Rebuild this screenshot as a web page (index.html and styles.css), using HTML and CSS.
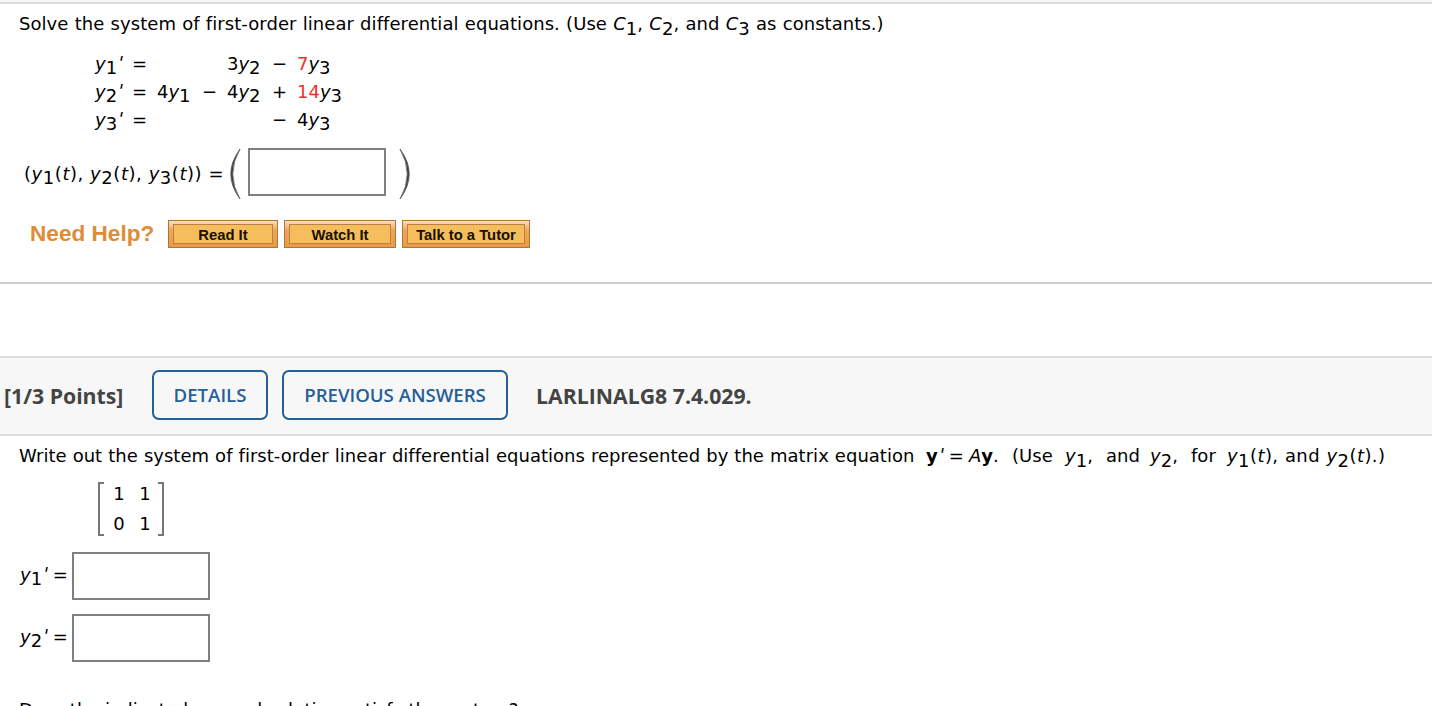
FILE: index.html
```html
<!DOCTYPE html>
<html lang="en">
<head>
<meta charset="utf-8">
<title>Differential equations</title>
<link rel="stylesheet" href="styles.css">
</head>
<body>
<div class="top-bar"></div>
<section class="question">
  <p class="prompt first">Solve the system of first-order linear differential equations. (Use <i>C</i><sub>1</sub>, <i>C</i><sub>2</sub>, and <i>C</i><sub>3</sub> as constants.)</p>
  <div class="system">
    <span><i>y</i><sub>1</sub><i class="prime">'</i></span><span>=</span><span></span><span></span><span>3<i>y</i><sub>2</sub></span><span>−</span><span><b class="red">7</b><i>y</i><sub>3</sub></span>
    <span><i>y</i><sub>2</sub><i class="prime">'</i></span><span>=</span><span>4<i>y</i><sub>1</sub></span><span>−</span><span>4<i>y</i><sub>2</sub></span><span>+</span><span><b class="red">14</b><i>y</i><sub>3</sub></span>
    <span><i>y</i><sub>3</sub><i class="prime">'</i></span><span>=</span><span></span><span></span><span></span><span>−</span><span>4<i>y</i><sub>3</sub></span>
  </div>
  <div class="solution">
    <span class="vector">(<i>y</i><sub>1</sub>(<i>t</i>), <i>y</i><sub>2</sub>(<i>t</i>), <i>y</i><sub>3</sub>(<i>t</i>)) =</span>
    <svg class="paren" width="12" height="52" viewBox="0 0 12 52"><path d="M11 1Q-7.500 26 11 51Q-3.500 26 11 1Z"/></svg>
    <input class="answer" type="text" aria-label="Solution">
    <svg class="paren close" width="12" height="52" viewBox="0 0 12 52"><path d="M1 1Q19.500 26 1 51Q15.500 26 1 1Z"/></svg>
  </div>
  <div class="help">
    <strong class="help-title">Need Help?</strong>
    <button class="help-btn read"><span>Read It</span></button>
    <button class="help-btn watch"><span>Watch It</span></button>
    <button class="help-btn tutor"><span>Talk to a Tutor</span></button>
  </div>
</section>
<header class="question-header">
  <span class="points">[1/3 Points]</span>
  <button class="outline details">DETAILS</button>
  <button class="outline previous">PREVIOUS ANSWERS</button>
  <span class="code">LARLINALG8 7.4.029.</span>
</header>
<section class="question second-question">
  <p class="prompt second"><span class="lead">Write out the system of first-order linear differential equations represented by the matrix equation</span><span class="eq"><b>y</b><i class="prime">'</i> = <i>A</i><b>y</b>.</span><span class="use">(Use</span><span class="var"><i>y</i><sub>1</sub>,</span><span class="and">and</span><span class="var"><i>y</i><sub>2</sub>,</span><span class="for">for</span><span class="tail"><i>y</i><sub>1</sub>(<i>t</i>), and <i>y</i><sub>2</sub>(<i>t</i>).)</span></p>
  <div class="matrix">
    <span>1</span><span>1</span><span>0</span><span>1</span>
  </div>
  <div class="field"><label for="y1"><i>y</i><sub>1</sub><i class="prime">'</i> =</label><input class="answer" id="y1" type="text"></div>
  <div class="field"><label for="y2"><i>y</i><sub>2</sub><i class="prime">'</i> =</label><input class="answer" id="y2" type="text"></div>
  <p class="prompt last">Does the indicated general solution satisfy the system?</p>
</section>
</body>
</html>
```
FILE: styles.css
```css
* { box-sizing: border-box; }
body {
  margin: 0;
  height: 706px;
  overflow: hidden;
  background: #fff;
  color: #000;
  font: 18px/28px Verdana, "DejaVu Sans", sans-serif;
}
p { margin: 0; white-space: nowrap; }
sub { font-size: 18px; line-height: 0; vertical-align: -5px; }
.prime { display: inline-block; width: 5px; margin-left: 1px; line-height: 0; vertical-align: 1px; transform: skewX(-12deg); }
.top-bar { height: 4px; background: #f6f6f6; border-bottom: 2px solid #ddd; }
.question { height: 280px; padding-top: 6px; border-bottom: 2px solid #ccc; }
.prompt { height: 28px; letter-spacing: 0.060px; word-spacing: 0.400px; }
.first { padding-left: 19px; }
.system {
  display: grid;
  grid-template-columns: 37px 25px 45px 25px 45px 25px 60px;
  grid-auto-rows: 28px;
  padding: 12px 0 0 95px;
  white-space: nowrap;
}
.system sub, .solution sub, .field sub { vertical-align: -4px; }
.red { color: #ee3124; font-weight: normal; }
.solution { display: flex; height: 52px; margin-top: 14px; padding-left: 24px; white-space: nowrap; }
.vector { width: 205px; line-height: 52px; letter-spacing: 0.550px; }
.paren { display: block; fill: #444; stroke: #555; stroke-width: 0.800; }
.close { margin-left: 13px; }
.answer { width: 138px; height: 48px; border: 2px solid #808080; padding: 0; background: #fff; border-radius: 0; outline: 0; }
.solution .answer { margin-left: 7px; }
.help { display: flex; height: 28px; margin-top: 20px; padding-left: 30px; font-family: "Liberation Sans", Arial, sans-serif; }
.help-title { width: 138px; color: #e08b35; font-size: 22.600px; line-height: 28px; }
.help-btn {
  height: 28px;
  padding: 3px 4px;
  border: 1px solid #aa7739;
  background: linear-gradient(#fae0c3, #f0a658 35%, #eb9a46);
  font: bold 14.800px/20px "Liberation Sans", Arial, sans-serif;
  color: #171103;
}
.help-btn span { display: block; height: 20px; border: 1px solid #b88143; background: #f5bd5b; white-space: nowrap; }
.read { width: 110px; }
.watch { width: 112px; margin-left: 6px; }
.tutor { width: 128px; margin-left: 6px; }
.question-header {
  display: flex;
  height: 80px;
  margin-top: 72px;
  padding: 12px 0 0 4px;
  border-top: 2px solid #ddd;
  border-bottom: 2px solid #ddd;
  background: #f7f7f7;
  color: #444;
  font: bold 21.250px/52px "Open Sans", sans-serif;
  white-space: nowrap;
}
.points { width: 148px; }
.outline {
  height: 50px;
  padding: 0;
  border: 2px solid #246097;
  border-radius: 7px;
  background: transparent;
  color: #246097;
  font: 600 18.600px/46px "Open Sans", sans-serif;
}
.details { width: 116px; }
.previous { width: 226px; margin-left: 14px; }
.code { margin-left: 28px; }
.second-question { height: auto; border: 0; }
.second { display: flex; padding-left: 19px; letter-spacing: 0.020px; word-spacing: 0.300px; }
.lead { width: 907px; }
.eq { width: 86px; word-spacing: -0.700px; }
.use { width: 53px; }
.var { width: 41px; }
.and { width: 44px; }
.for { width: 36px; }
.tail { letter-spacing: 0.420px; }
.matrix {
  display: grid;
  grid-template-columns: 26px 26px;
  grid-auto-rows: 30px;
  justify-content: center;
  text-align: center;
  width: 66px;
  height: 54px;
  margin: 12px 0 0 98px;
  padding-left: 2px;
  line-height: 23px;
  border: 2px solid #777;
  border-width: 0 2px;
  background: linear-gradient(#777, #777) left top / 4px 2px no-repeat,
    linear-gradient(#777, #777) right top / 4px 2px no-repeat,
    linear-gradient(#777, #777) left bottom / 4px 2px no-repeat,
    linear-gradient(#777, #777) right bottom / 4px 2px no-repeat;
}
.field { display: flex; height: 48px; margin-top: 14px; padding-left: 20px; line-height: 46px; }
.matrix + .field { margin-top: 16px; }
.field label { width: 52px; white-space: nowrap; word-spacing: -1px; }
.last { margin-top: 34px; padding-left: 19px; letter-spacing: 0; word-spacing: -0.200px; }
```
